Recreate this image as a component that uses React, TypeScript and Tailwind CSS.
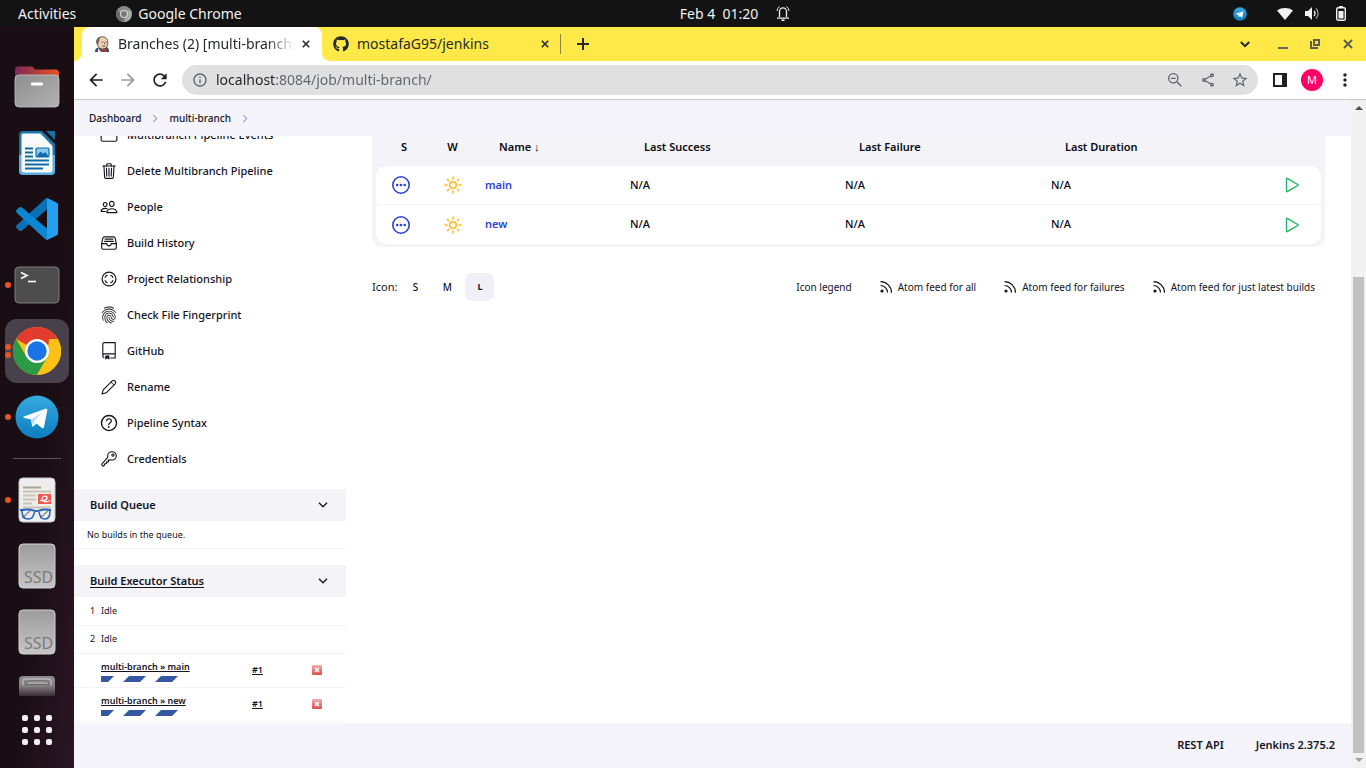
import type { ReactNode } from "react";
import {
  IoTrashOutline,
  IoPeopleOutline,
  IoFileTrayFullOutline,
  IoFingerPrintOutline,
  IoHelpCircleOutline,
  IoKeyOutline,
  IoFolderOutline,
} from "react-icons/io5";
import { GoRepo } from "react-icons/go";
import { FaGithub } from "react-icons/fa";
import {
  MdArrowBack,
  MdArrowForward,
  MdRefresh,
  MdInfoOutline,
  MdOutlineShare,
  MdStarBorder,
  MdMoreVert,
} from "react-icons/md";

/* ---------- Desktop top bar ---------- */

function TelegramMark({ className, id }: { className: string; id: string }) {
  return (
    <svg viewBox="0 0 44 44" className={className} aria-hidden="true">
      <defs>
        <linearGradient id={id} x1="0" y1="0" x2="0" y2="1">
          <stop offset="0" stopColor="#36aadf" />
          <stop offset="1" stopColor="#0d7dbf" />
        </linearGradient>
      </defs>
      <circle cx="22" cy="22" r="21.5" fill={`url(#${id})`} />
      <path d="M9 21.500 30.500 13.800c1.200-.4 2 .3 1.700 1.600L29 32c-.3 1.400-1.200 1.700-2.300.9l-5.200-4.500-3 2.900c-.9.6-1.400.3-1.500-.6l-.9-6.100-7-1.700c-1-.3-1.100-1-.1-1.400z" fill="#fff" />
      <path d="M16.300 24.500 27 17.500 19.500 26 18 31z" fill="#b9d9ee" />
    </svg>
  );
}

function TopBar() {
  return (
    <header className="grid h-[27px] shrink-0 grid-cols-3 items-center bg-[#131313] pl-[18px] pr-5 text-sm text-[#f2f2f2]">
      <div className="flex items-center gap-10">
        <button type="button">Activities</button>
        <button type="button" className="flex items-center gap-[6px]">
          <svg viewBox="0 0 16 16" className="size-4" aria-hidden="true">
            <circle cx="8" cy="8" r="8" fill="#8a8a8a" />
            <path d="M8 4.500H15A8 8 0 0 1 8 16L11 9.500z" fill="#a8a8a8" />
            <path d="M1.500 3.500 5 9.500 8 11.500 7 16A8 8 0 0 1 1.500 3.500z" fill="#6b6b6b" />
            <circle cx="8" cy="8" r="4" fill="#d8d8d8" />
            <circle cx="8" cy="8" r="2.900" fill="#777" />
          </svg>
          Google Chrome
        </button>
      </div>
      <div className="flex items-center justify-center gap-[18px] pl-[106px]">
        <button type="button" className="whitespace-pre">Feb 4  01:20</button>
        <svg viewBox="0 0 14 17" className="h-[17px] w-[14px]" fill="none" stroke="#f2f2f2" aria-hidden="true">
          <path d="M3.500 12V6.500a3.500 3.700 0 0 1 7 0V12M1 13.200h12" strokeWidth="1.300" />
          <path d="M3.500 1.500A6 6 0 0 0 1 6M10.500 1.500A6 6 0 0 1 13 6" strokeWidth="1" />
          <path d="M5.500 15.200h3" strokeWidth="1.600" />
        </svg>
      </div>
      <div className="flex items-center justify-end">
        <TelegramMark id="tg-tray" className="mr-[30px] size-[14px]" />
        <svg viewBox="0 0 16 12" className="mr-3 h-3 w-4" aria-hidden="true">
          <path d="M0 2.500C4.500-.8 11.500-.8 16 2.500L8 12z" fill="#f2f2f2" />
        </svg>
        <svg viewBox="0 0 15 13" className="mr-4 h-[13px] w-[15px]" aria-hidden="true">
          <path d="M0 4h3l4-4v13L3 9H0z" fill="#f2f2f2" />
          <path d="M9 4a3.500 3.500 0 0 1 0 5" fill="none" stroke="#f2f2f2" strokeWidth="1.300" />
          <path d="M11 1.500a7 7 0 0 1 0 10" fill="none" stroke="#a8a8a8" strokeWidth="1.200" />
        </svg>
        <svg viewBox="0 0 10 15" className="h-[15px] w-[10px]" aria-hidden="true">
          <path d="M3 0h4v1.500H3z" fill="#f2f2f2" />
          <rect x=".7" y="1.700" width="8.600" height="12.600" rx="1.500" fill="none" stroke="#f2f2f2" strokeWidth="1.400" />
          <path d="M2.500 5h5v7.500h-5z" fill="#f2f2f2" />
        </svg>
      </div>
    </header>
  );
}

/* ---------- Dock ---------- */

function DockItem({ label, dots = 0, active = false, children }: { label: string; dots?: number; active?: boolean; children: ReactNode }) {
  return (
    <button
      type="button"
      aria-label={label}
      className={
        active
          ? "relative flex size-16 shrink-0 items-center justify-center rounded-xl bg-[#48404a]"
          : "relative flex size-16 shrink-0 items-center justify-center rounded-xl"
      }
    >
      {dots > 0 && (
        <span className="absolute inset-y-0 left-0 flex flex-col items-center justify-center gap-[2px]">
          {Array.from({ length: dots }, (_, i) => (
            <span key={i} className="size-[6px] rounded-full bg-[#e95420]" />
          ))}
        </span>
      )}
      {children}
    </button>
  );
}

function SsdIcon() {
  return (
    <svg viewBox="0 0 38 46" className="h-[46px] w-[38px]" aria-hidden="true">
      <defs>
        <linearGradient id="ssd" x1="0" y1="0" x2="0" y2="1">
          <stop offset="0" stopColor="#9c9c9c" />
          <stop offset="1" stopColor="#c6c6c6" />
        </linearGradient>
      </defs>
      <rect x="1" y="1" width="36" height="44" rx="4" fill="url(#ssd)" stroke="#d2d2d2" />
      <text x="6" y="40" fontFamily="'Noto Sans', sans-serif" fontSize="16" fill="#7b7b7b">SSD</text>
    </svg>
  );
}

function Dock() {
  return (
    <nav
      aria-label="Dock"
      className="flex w-[74px] shrink-0 flex-col items-center gap-[2px] overflow-hidden bg-linear-to-br from-[#1a0e15] from-60% to-[#2b1624] pt-7"
    >
      <DockItem label="Files">
        <svg viewBox="0 0 46 42" className="h-[42px] w-[46px]" aria-hidden="true">
          <defs>
            <linearGradient id="fl-back" x1="0" y1="0" x2="1" y2="0">
              <stop offset="0" stopColor="#7b2a55" />
              <stop offset="1" stopColor="#e95420" />
            </linearGradient>
            <linearGradient id="fl-front" x1="0" y1="0" x2="1" y2="1">
              <stop offset="0" stopColor="#8e8e8e" />
              <stop offset="1" stopColor="#b2b2b2" />
            </linearGradient>
          </defs>
          <path d="M1 4a3.500 3.500 0 0 1 3.500-3.500H17a3 3 0 0 1 2.500 1.200L21 3.500h20.500A3.500 3.500 0 0 1 45 7v14H1z" fill="url(#fl-back)" />
          <rect x="1" y="9" width="44" height="32" rx="4" fill="url(#fl-front)" stroke="#c4c4c4" strokeWidth=".8" />
          <rect x="17" y="16.500" width="12" height="3" rx="1" fill="#fff" />
        </svg>
      </DockItem>
      <DockItem label="LibreOffice Writer">
        <svg viewBox="0 0 38 46" className="h-[46px] w-[38px]" aria-hidden="true">
          <path d="M5 1h19l13 13v27a4 4 0 0 1-4 4H5a4 4 0 0 1-4-4V5a4 4 0 0 1 4-4z" fill="#1a74aa" />
          <path d="M1 25h36v16a4 4 0 0 1-4 4H5a4 4 0 0 1-4-4z" fill="#5aaee0" />
          <path d="M5 3.500h17.500L34.500 16v24a2.500 2.500 0 0 1-2.500 2.500H6A2.500 2.500 0 0 1 3.500 40V5A1.500 1.500 0 0 1 5 3.500z" fill="#fafafa" />
          <path d="M28 1h9v9z" fill="#1a6ea3" />
          <path d="M7 18.500h8M7 22.500h8M7 26.500h8M7 30.500h24M7 34.500h24M7 38.500h18" stroke="#0d6ca5" strokeWidth="1.800" />
          <rect x="18" y="18" width="13" height="9" rx="1" fill="#8cc9ee" stroke="#0d6ca5" strokeWidth="1.200" />
          <path d="m19 27 1-3 3-2.500 2 2.500 2-2 2 2 1.500 3z" fill="#0d6ca5" />
        </svg>
      </DockItem>
      <DockItem label="Visual Studio Code">
        <svg viewBox="0 0 42 42" className="size-[42px]" aria-hidden="true">
          <path d="M31 0v11.500L6 32.500c-1 .8-2 .7-2.800 0L.7 30.200c-.9-.9-.9-2 0-2.900L28.500 1.500c.8-.8 1.500-1.300 2.500-1.500z" fill="#0a6fb4" />
          <path d="M31 42V30.500L6 9.500c-1-.8-2-.7-2.800 0L.7 11.800c-.9.900-.9 2 0 2.900L28.500 40.500c.8.8 1.500 1.300 2.500 1.500z" fill="#0d87d1" />
          <path d="M31 0 40.500 4.500c1 .5 1.500 1.200 1.500 2.300v28.400c0 1.100-.5 1.800-1.500 2.300L31 42z" fill="#25a0f0" />
        </svg>
      </DockItem>
      <DockItem label="Terminal" dots={1}>
        <svg viewBox="0 0 46 38" className="h-[38px] w-[46px]" aria-hidden="true">
          <rect x="1" y="1" width="44" height="36" rx="4" fill="#4d4d4d" stroke="#7c7c7c" />
          <path d="m7 6.500 6 3-6 3" fill="none" stroke="#fff" strokeWidth="1.700" />
          <path d="M14 15.500h8" stroke="#fff" strokeWidth="1.600" />
        </svg>
      </DockItem>
      <DockItem label="Google Chrome" dots={2} active>
        <svg viewBox="0 0 48 48" className="size-12" aria-hidden="true">
          <circle cx="24" cy="24" r="24" fill="#fbc116" />
          <path d="M24 24 3.200 12A24 24 0 0 1 44.800 12z" fill="#e33b2e" />
          <path d="M3.200 12A24 24 0 0 0 24 48L34.400 30 24 24 13.600 30z" fill="#2a9a47" />
          <path d="M44.800 12A24 24 0 0 1 24 48L34.400 30 36 12z" fill="#fbc116" />
          <circle cx="24" cy="24" r="12" fill="#fff" />
          <circle cx="24" cy="24" r="9.700" fill="#1a73e8" />
        </svg>
      </DockItem>
      <DockItem label="Telegram" dots={1}>
        <TelegramMark id="tg-dock" className="size-[44px]" />
      </DockItem>
      <hr className="my-[7px] w-12 border-t border-[#5c5359]" />
      <DockItem label="Document Viewer" dots={1}>
        <svg viewBox="0 0 38 46" className="h-[46px] w-[38px]" aria-hidden="true">
          <rect x="1" y="1" width="36" height="44" rx="4" fill="#ededed" stroke="#c9c9c9" />
          <path d="M5 10.500h18" stroke="#aaa38f" strokeWidth="2" />
          <path d="M5 14.500h28M5 18.500h13M5 22.500h13M5 26.500h9M5 30.500h28" stroke="#c9c4b5" strokeWidth="1.800" />
          <rect x="20" y="17" width="13" height="10" fill="#f05a4c" />
          <path d="M22 23.500c5 1 8-1.500 7-3.500s-5-.5-5 2 3 4 8 1.500" fill="none" stroke="#fff" strokeWidth="1.200" />
          <path d="m4 41 8-7M22 41l8-7" stroke="#888" strokeWidth="1.200" />
          <path d="M2 33h2c4-.8 8-.8 12 .6 2 .5 3 .5 5 0 4-1.400 7-1.400 11-.6h1" fill="none" stroke="#2461b8" strokeWidth="2" />
          <path d="M4 34c0 5 1.500 8 6 8s6-3 6.500-7.500M21 34.500c.5 4.500 2 7.500 6 7.500s5-3 5-8" fill="none" stroke="#2461b8" strokeWidth="1.500" />
        </svg>
      </DockItem>
      <DockItem label="SSD volume 1"><SsdIcon /></DockItem>
      <DockItem label="SSD volume 2"><SsdIcon /></DockItem>
      <button type="button" aria-label="Trash" className="flex h-[30px] w-16 shrink-0 items-end justify-center overflow-hidden">
        <svg viewBox="0 0 38 21" className="h-[21px] w-[38px]" aria-hidden="true">
          <defs>
            <linearGradient id="tr" x1="0" y1="0" x2="0" y2="1">
              <stop offset="0" stopColor="#8d8d8d" />
              <stop offset=".5" stopColor="#857f80" />
              <stop offset="1" stopColor="#3a2c35" />
            </linearGradient>
          </defs>
          <path d="M1 21V5a4 4 0 0 1 4-4h28a4 4 0 0 1 4 4v16z" fill="url(#tr)" />
          <path d="M5 10V5.500A2 2 0 0 1 7 4h24a2 2 0 0 1 2 1.500V10" fill="none" stroke="#d0d0d0" strokeWidth="1" />
          <path d="M8 9.500V7.500l3-1.500h17l3 2v1.500z" fill="#a4a4a4" stroke="#5e5e5e" strokeWidth=".8" />
        </svg>
      </button>
      <DockItem label="Show Applications">
        <span className="grid grid-cols-3 gap-[6px]">
          {Array.from({ length: 9 }, (_, i) => (
            <span key={i} className="size-[6px] rounded-[2px] bg-[#f0f0f0]" />
          ))}
        </span>
      </DockItem>
    </nav>
  );
}

/* ---------- Browser chrome ---------- */

function CloseX({ className }: { className: string }) {
  return (
    <svg viewBox="0 0 10 10" className={className} stroke="currentColor" strokeWidth="2" fill="none" aria-hidden="true">
      <path d="m1 1 8 8M9 1 1 9" />
    </svg>
  );
}

function JenkinsFace() {
  return (
    <svg viewBox="0 0 16 16" className="size-4 shrink-0" aria-hidden="true">
      <path d="M1 16c0-3 1-4 3.500-4.500L12 11c2.500.5 3 2 3 5z" fill="#3d4f66" />
      <path d="M3 7C2.500 3 5 .8 8.500.8S14 3 13.800 7c0 3.500-1.800 6-5 6S4 11 3 7z" fill="#efd1b0" stroke="#40352f" strokeWidth=".8" />
      <path d="M2.500 7.500C1.500 3 4 1 7 .8 5 2.500 5.500 5 4.500 7l-.5 3z" fill="#6f6459" />
      <path d="M7.500 6h1.500M11 6h1.500M8 9.800c1.500.6 2.500.5 3.500 0M10 6.500l.8 1.700" stroke="#40352f" strokeWidth=".8" fill="none" />
      <path d="m7 12.500 2.500 1.300 2.800-1.300V16L9.500 15 7 16z" fill="#d0312b" />
      <path d="M4 12l3 4H4z" fill="#f2f2f2" />
    </svg>
  );
}

function TabStrip() {
  return (
    <div className="flex h-[34px] shrink-0 items-center bg-[#ffe948] text-sm text-[#27292d]">
      <div className="flex h-full w-2 items-end bg-white">
        <div className="h-full w-full rounded-br-lg bg-[#ffe948]" />
      </div>
      <div className="flex h-full w-60 shrink-0 items-center rounded-t-lg bg-white pl-3 pr-[11px]">
        <JenkinsFace />
        <span className="ml-2 w-[176px] overflow-hidden whitespace-nowrap [mask-image:linear-gradient(90deg,#000_85%,transparent)]">
          Branches (2) [multi-branch] [Jenkins]
        </span>
        <button type="button" aria-label="Close tab" className="ml-2">
          <CloseX className="size-2" />
        </button>
      </div>
      <div className="flex h-full w-2 items-end bg-white">
        <div className="h-full w-full rounded-bl-lg bg-[#ffe948]" />
      </div>
      <div className="flex h-full w-[230px] items-center pl-[3px] pr-[11px]">
        <FaGithub className="size-4 shrink-0" />
        <span className="ml-2 flex-1 whitespace-nowrap">mostafaG95/jenkins</span>
        <button type="button" aria-label="Close tab">
          <CloseX className="size-2" />
        </button>
      </div>
      <span className="h-5 w-px bg-[#8f8640]" />
      <button type="button" aria-label="New tab" className="ml-4">
        <svg viewBox="0 0 12 12" className="size-3" stroke="currentColor" strokeWidth="2" aria-hidden="true">
          <path d="M6 0v12M0 6h12" />
        </svg>
      </button>
      <div className="ml-auto flex items-center pr-[13px] text-[#5f5f58]">
        <button type="button" aria-label="Search tabs" className="mr-7 text-[#27292d]">
          <svg viewBox="0 0 10 7" className="h-[7px] w-[10px]" stroke="currentColor" strokeWidth="2" fill="none" aria-hidden="true">
            <path d="m.8 1 4.200 4.200L9.200 1" />
          </svg>
        </button>
        <button type="button" aria-label="Minimize" className="mr-[22px] flex h-[10px] w-[10px] items-end">
          <span className="h-[2px] w-full bg-[#6a6858]" />
        </button>
        <button type="button" aria-label="Restore" className="mr-[23px]">
          <svg viewBox="0 0 10 10" className="size-[10px]" fill="none" stroke="currentColor" strokeWidth="2" aria-hidden="true">
            <path d="M4 1h5v5H4zM1 2v7h7" />
          </svg>
        </button>
        <button type="button" aria-label="Close window">
          <CloseX className="size-[10px]" />
        </button>
      </div>
    </div>
  );
}

function Toolbar() {
  return (
    <div className="flex h-[39px] shrink-0 items-center border-b border-[#c9cacd] bg-white pl-3 pr-[11px] text-[#202124]">
      <button type="button" aria-label="Back"><MdArrowBack className="size-5" /></button>
      <button type="button" aria-label="Forward" className="ml-3 text-[#9a9b9e]"><MdArrowForward className="size-5" /></button>
      <button type="button" aria-label="Reload" className="ml-3"><MdRefresh className="size-5" /></button>
      <div className="ml-3 flex h-[30px] min-w-0 flex-1 items-center rounded-full bg-[#e0e0e0] pl-[10px] pr-[9px] text-[#5f6368]">
        <MdInfoOutline className="size-4 shrink-0" />
        <input
          aria-label="Address"
          defaultValue="localhost:8084/job/multi-branch/"
          className="ml-2 min-w-0 flex-1 bg-[linear-gradient(90deg,#202124_59px,#5f6368_59px)] bg-clip-text text-sm text-transparent outline-none"
        />
        <button type="button" aria-label="Zoom">
          <svg viewBox="0 0 14 14" className="mr-[2px] size-[14px]" fill="none" stroke="currentColor" strokeWidth="1.300" aria-hidden="true">
            <circle cx="5.300" cy="5.300" r="4.600" />
            <path d="m8.800 8.800 4.500 4.500M3 5.300h4.600" />
          </svg>
        </button>
        <button type="button" aria-label="Share" className="ml-4"><MdOutlineShare className="size-4" /></button>
        <button type="button" aria-label="Bookmark" className="ml-[15px]"><MdStarBorder className="size-[18px]" /></button>
      </div>
      <button type="button" aria-label="Side panel" className="ml-[15px]">
        <svg viewBox="0 0 14 14" className="size-[14px]" aria-hidden="true">
          <rect x="1" y="1" width="12" height="12" fill="#fff" stroke="#202124" strokeWidth="2" />
          <path d="M9 1h4v12H9z" fill="#202124" />
        </svg>
      </button>
      <button type="button" className="ml-[14px] flex size-[22px] items-center justify-center rounded-full bg-[#ff0066] text-[11px] text-white">
        M
      </button>
      <button type="button" aria-label="Menu" className="ml-3"><MdMoreVert className="size-5" /></button>
    </div>
  );
}

/* ---------- Jenkins page ---------- */

function Chevron() {
  return (
    <svg viewBox="0 0 6 10" className="h-[9px] w-[6px]" fill="none" stroke="#a5a1bd" strokeWidth="1.200" aria-hidden="true">
      <path d="m1 1 4 4-4 4" />
    </svg>
  );
}

function Breadcrumbs() {
  return (
    <nav aria-label="Breadcrumb" className="relative z-10 flex h-9 shrink-0 items-center gap-[11px] bg-[#f5f4fa] px-[15px] text-[10px] font-medium text-[#14141f]">
      <a href="#dashboard">Dashboard</a>
      <Chevron />
      <a href="#multi-branch">multi-branch</a>
      <Chevron />
    </nav>
  );
}

function RelationshipIcon() {
  return (
    <svg viewBox="0 0 16 16" className="size-4" fill="none" stroke="currentColor" aria-hidden="true">
      <circle cx="8" cy="8" r="6.900" strokeWidth="1.200" />
      <path d="M6.500 4.200C5 4.600 4.200 5.500 4.100 6.800M9.500 4.200c1.500.4 2.300 1.300 2.400 2.600M6.500 11.800c-1.500-.4-2.300-1.300-2.400-2.600M9.500 11.800c1.500-.4 2.300-1.300 2.400-2.600" strokeWidth="1.200" />
    </svg>
  );
}

function PencilIcon() {
  return (
    <svg viewBox="0 0 16 16" className="size-4" fill="none" stroke="currentColor" strokeLinejoin="round" aria-hidden="true">
      <path d="M1 15 2.200 10.800 11.200 1.800c1.800-1.500 4.300 1 3 3L5.200 13.800z" strokeWidth="1.100" />
      <path d="M10.400 2.800c.3 1.500 1.300 2.500 2.800 2.800" strokeWidth="1" />
    </svg>
  );
}

const tasks: { label: string; icon: ReactNode }[] = [
  { label: "Multibranch Pipeline Events", icon: <IoFolderOutline className="size-[18px]" /> },
  { label: "Delete Multibranch Pipeline", icon: <IoTrashOutline className="size-[18px]" /> },
  { label: "People", icon: <IoPeopleOutline className="size-[18px]" /> },
  { label: "Build History", icon: <IoFileTrayFullOutline className="size-[18px]" /> },
  { label: "Project Relationship", icon: <RelationshipIcon /> },
  { label: "Check File Fingerprint", icon: <IoFingerPrintOutline className="size-[18px]" /> },
  { label: "GitHub", icon: <GoRepo className="size-[18px]" /> },
  { label: "Rename", icon: <PencilIcon /> },
  { label: "Pipeline Syntax", icon: <IoHelpCircleOutline className="size-[22px] shrink-0" /> },
  { label: "Credentials", icon: <IoKeyOutline className="size-[18px]" /> },
];

function PaneHeader({ title, underlined = false }: { title: string; underlined?: boolean }) {
  return (
    <h2 className="flex h-8 items-center justify-between bg-[#f3f3f8] pl-4 pr-[18px] text-[11px] font-semibold text-[#14141f]">
      {underlined ? <a href="#executors" className="underline underline-offset-2">{title}</a> : <span>{title}</span>}
      <button type="button" aria-label={`Collapse ${title}`}>
        <svg viewBox="0 0 10 6" className="h-[6px] w-[10px]" fill="none" stroke="#14141f" strokeWidth="1.300" aria-hidden="true">
          <path d="m1 .8 4 4 4-4" />
        </svg>
      </button>
    </h2>
  );
}

function StopIcon() {
  return (
    <svg viewBox="0 0 10 10" className="size-[10px]" aria-hidden="true">
      <defs>
        <linearGradient id="stop" x1="0" y1="0" x2="0" y2="1">
          <stop offset="0" stopColor="#f0b0ae" />
          <stop offset="1" stopColor="#e04a4c" />
        </linearGradient>
      </defs>
      <rect width="10" height="10" rx="1" fill="url(#stop)" />
      <path d="m3 3 4 4M7 3 3 7" stroke="#fff" strokeWidth="1.500" />
    </svg>
  );
}

function BuildRow({ job }: { job: string }) {
  return (
    <tr className="border-b border-[#f3f3f8] font-semibold">
      <td />
      <td className="h-[34px] pt-[2px]">
        <a href="#job" className="block leading-3 underline underline-offset-1">{`multi-branch » ${job}`}</a>
        <svg viewBox="0 0 77 6" className="mt-[3px] h-[6px] w-[77px]" role="img" aria-label="Build progress">
          <path d="M0 0h13L7 6H0zM28 0h17l-6 6H22zM60 0h17l-6 6H54z" fill="#3458a4" />
        </svg>
      </td>
      <td><a href="#build" className="underline underline-offset-1">#1</a></td>
      <td><button type="button" aria-label="Stop build" className="flex"><StopIcon /></button></td>
    </tr>
  );
}

function Sidebar() {
  return (
    <aside className="-mt-[19px] w-[272px] shrink-0 text-[#14141f]">
      <ul className="text-[11px] font-medium">
        {tasks.map((t) => (
          <li key={t.label}>
            <a href="#task" className="flex h-9 items-center gap-2 pl-[25px]">
              <span className="flex w-5 justify-center">{t.icon}</span>
              {t.label}
            </a>
          </li>
        ))}
      </ul>
      <section className="mt-3">
        <PaneHeader title="Build Queue" />
        <p className="flex h-7 items-center border-b border-[#f3f3f8] pl-[13px] text-[9px]">No builds in the queue.</p>
      </section>
      <section className="mt-4">
        <PaneHeader title="Build Executor Status" underlined />
        <table className="w-full table-fixed border-collapse text-[9px]">
          <colgroup>
            <col className="w-[27px]" />
            <col />
            <col className="w-[60px]" />
            <col className="w-[34px]" />
          </colgroup>
          <tbody>
            {[1, 2].map((n) => (
              <tr key={n} className="border-b border-[#f3f3f8]">
                <td className="h-7 pl-4">{n}</td>
                <td colSpan={3}>Idle</td>
              </tr>
            ))}
            <BuildRow job="main" />
            <BuildRow job="new" />
          </tbody>
        </table>
      </section>
    </aside>
  );
}

function StatusIcon() {
  return (
    <svg viewBox="0 0 18 18" className="mx-auto size-[18px]" aria-label="Pending" role="img">
      <circle cx="9" cy="9" r="8.200" fill="none" stroke="#2b43d8" strokeWidth="1.600" />
      <g fill="#2b43d8">
        <circle cx="5.300" cy="9" r="1.300" />
        <circle cx="9" cy="9" r="1.300" />
        <circle cx="12.700" cy="9" r="1.300" />
      </g>
    </svg>
  );
}

function SunIcon() {
  return (
    <svg viewBox="0 0 18 18" className="mx-auto size-[18px]" fill="none" stroke="#fdb913" strokeWidth="1.500" role="img" aria-label="Sunny">
      <circle cx="9" cy="9" r="3.300" />
      <path d="M9 .5v3M9 14.500v3M.5 9h3M14.500 9h3M3 3l2 2M13 13l2 2M3 15l2-2M13 5l2-2" />
    </svg>
  );
}

function BranchTable() {
  return (
    <div className="rounded-b-[10px] bg-[#f3f3f8] px-1 pb-[2px]">
      <table className="w-full table-fixed border-separate border-spacing-x-0 border-spacing-y-px text-left text-[11px] text-[#0a0a12]">
        <colgroup>
          <col className="w-[50px]" />
          <col className="w-[53px]" />
          <col className="w-[143px]" />
          <col className="w-[215px]" />
          <col className="w-[206px]" />
          <col />
          <col className="w-[58px]" />
        </colgroup>
        <thead>
          <tr className="font-semibold">
            <th className="h-7 pb-2 pl-[6px] text-center font-semibold">S</th>
            <th className="pb-2 text-center font-semibold">W</th>
            <th className="pb-2 pl-5 font-semibold">Name ↓</th>
            <th className="pb-2 pl-[22px] font-semibold">Last Success</th>
            <th className="pb-2 pl-[22px] font-semibold">Last Failure</th>
            <th className="pb-2 pl-[22px] font-semibold">Last Duration</th>
            <th aria-label="Actions" />
          </tr>
        </thead>
        <tbody className="font-medium">
          {["main", "new"].map((name, row) => (
            <tr key={name}>
              <td className={row === 0 ? "h-[38px] rounded-bl-[3px] rounded-tl-[10px] bg-white" : "h-[39px] rounded-bl-[10px] rounded-tl-[3px] bg-white"}>
                <StatusIcon />
              </td>
              <td className="bg-white"><SunIcon /></td>
              <td className="bg-white pl-[6px] font-semibold text-[#2b43d8]"><a href="#branch">{name}</a></td>
              <td className="bg-white pl-2">N/A</td>
              <td className="bg-white pl-2">N/A</td>
              <td className="bg-white pl-2">N/A</td>
              <td className={row === 0 ? "rounded-br-[3px] rounded-tr-[10px] bg-white" : "rounded-br-[10px] rounded-tr-[3px] bg-white"}>
                <button type="button" aria-label={`Build ${name}`} className="flex w-full justify-center">
                  <svg viewBox="0 0 14 16" className="h-4 w-[14px]" fill="none" stroke="#1fb567" strokeWidth="1.400" strokeLinejoin="round" aria-hidden="true">
                    <path d="M1.500 1.800v12.400c0 .4.400.6.800.4l10.400-6.100c.4-.2.400-.8 0-1L2.300 1.400c-.4-.2-.8 0-.8.4z" />
                  </svg>
                </button>
              </td>
            </tr>
          ))}
        </tbody>
      </table>
    </div>
  );
}

function FeedIcon() {
  return (
    <svg viewBox="0 0 12 12" className="size-3" fill="none" stroke="currentColor" strokeWidth="1.200" aria-hidden="true">
      <circle cx="2" cy="10" r="1.600" fill="currentColor" stroke="none" />
      <path d="M.5 4.500a7 7 0 0 1 7 7M.5.700c6 0 11 5 11 11" />
    </svg>
  );
}

function TableFooter() {
  return (
    <div className="mt-[26px] flex h-7 items-center justify-between text-[10px] text-[#14141f]">
      <div className="flex items-center font-medium">
        <span className="mr-[6px] text-[11px] font-normal">Icon:</span>
        <button type="button" className="h-7 w-6">S</button>
        <button type="button" className="ml-2 h-7 w-6">M</button>
        <button type="button" className="ml-[6px] h-7 w-[29px] rounded-[7px] bg-[#f1f0f7] text-[9px] font-bold">L</button>
      </div>
      <div className="flex items-center gap-7 pr-[10px]">
        <a href="#legend">Icon legend</a>
        {["all", "failures", "just latest builds"].map((kind) => (
          <a key={kind} href="#feed" className="flex items-center gap-[6px]">
            <FeedIcon />
            Atom feed for {kind}
          </a>
        ))}
      </div>
    </div>
  );
}

function Scrollbar() {
  return (
    <div className="flex w-[15px] shrink-0 flex-col items-center bg-[#f1f1f1] py-[6px]" aria-hidden="true">
      <svg viewBox="0 0 8 4" className="h-1 w-2"><path d="M0 4 4 0l4 4z" fill="#505050" /></svg>
      <div className="mb-[5px] mt-2 flex w-full flex-1 flex-col justify-end px-[2px]">
        <div className="h-3/4 bg-[#c1c1c1]" />
      </div>
      <svg viewBox="0 0 8 4" className="h-1 w-2"><path d="M0 0l4 4 4-4z" fill="#a0a0a0" /></svg>
    </div>
  );
}

export default function App() {
  return (
    <div className="flex h-screen flex-col overflow-hidden bg-white font-['Noto_Sans','Open_Sans',sans-serif]">
      <TopBar />
      <div className="flex min-h-0 flex-1">
        <Dock />
        <div className="flex min-w-0 flex-1 flex-col">
          <TabStrip />
          <Toolbar />
          <div className="flex min-h-0 flex-1">
            <div className="flex min-w-0 flex-1 flex-col">
              <Breadcrumbs />
              <div className="flex min-h-0 flex-1 overflow-hidden">
                <Sidebar />
                <main className="min-w-0 flex-1 pl-[26px] pr-[26px]">
                  <BranchTable />
                  <TableFooter />
                </main>
              </div>
              <footer className="flex h-[45px] shrink-0 items-center justify-end gap-8 bg-[#f5f4fa] pr-4 text-[11px] font-semibold text-[#14141f]">
                <a href="#api">REST API</a>
                <a href="#version">Jenkins 2.375.2</a>
              </footer>
            </div>
            <Scrollbar />
          </div>
        </div>
      </div>
    </div>
  );
}
